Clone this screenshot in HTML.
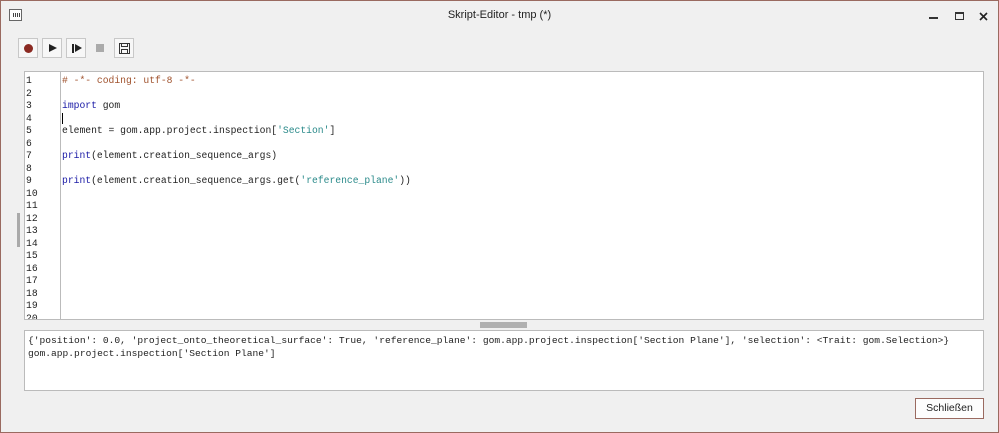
<!DOCTYPE html>
<html><head><meta charset="utf-8"><style>
*{margin:0;padding:0;box-sizing:border-box}
body{width:999px;height:433px;background:#f0f0f0;position:relative;overflow:hidden;font-family:"Liberation Sans",sans-serif}
.frame{position:absolute;left:0;top:0;width:999px;height:433px;border:1px solid #9a6a60}
.title{position:absolute;top:9px;left:0;width:999px;text-align:center;font-size:11px;color:#222}
.appicon{position:absolute;left:9px;top:9px;width:13px;height:12px;border:1px solid #666;background:#fff}
.appicon i{position:absolute;top:3px;width:1px;height:4px;background:#444}
.btn{position:absolute;top:38px;width:20px;height:20px;border:1px solid #c8c8c8;background:#f7f7f7}
.ed{position:absolute;left:24px;top:71px;width:960px;height:249px;background:#fff;border:1px solid #bbb}
.gut{position:absolute;left:0;top:0;width:36px;height:247px;border-right:1px solid #bbb;overflow:hidden}
.mono{font-family:"Liberation Mono",monospace;font-size:9.7px;line-height:12.5px;white-space:pre;color:#222}
.gut .mono{padding-left:1px;padding-top:3px}
.code{position:absolute;left:37px;top:3px}
.out{position:absolute;left:24px;top:330px;width:960px;height:61px;background:#fff;border:1px solid #bbb}
.close{position:absolute;left:915px;top:398px;width:69px;height:21px;border:1px solid #9a6a60;background:#fdfdfd;font-size:10.5px;text-align:center;line-height:19px;color:#222}
</style></head><body>
<div class="frame"></div>
<div class="appicon"><i style="left:3px"></i><i style="left:5px"></i><i style="left:7px"></i><i style="left:9px"></i></div>
<div class="title">Skript-Editor - tmp (*)</div>
<div style="position:absolute;left:929px;top:17px;width:9px;height:2px;background:#333"></div>
<div style="position:absolute;left:955px;top:12px;width:9px;height:8px;border:1px solid #333;border-top-width:2px"></div>
<svg style="position:absolute;left:979px;top:12px" width="9" height="9"><path d="M1 1L8 8M8 1L1 8" stroke="#222" stroke-width="1.6"/></svg>

<div class="btn" style="left:18px"><div style="position:absolute;left:5px;top:5px;width:9px;height:9px;border-radius:50%;background:#8b2a22"></div></div>
<div class="btn" style="left:42px"><div style="position:absolute;left:6px;top:5px;border-left:8px solid #222;border-top:4.5px solid transparent;border-bottom:4.5px solid transparent"></div></div>
<div class="btn" style="left:66px"><div style="position:absolute;left:5px;top:5px;width:2px;height:9px;background:#222"></div><div style="position:absolute;left:8px;top:5px;border-left:7px solid #222;border-top:4.5px solid transparent;border-bottom:4.5px solid transparent"></div></div>
<div class="btn" style="left:90px;border-color:#f0f0f0;background:#f0f0f0"><div style="position:absolute;left:5px;top:5px;width:8px;height:8px;background:#aaa"></div></div>
<div class="btn" style="left:114px"><div style="position:absolute;left:4px;top:4px;width:11px;height:11px;border:1px solid #333"></div><div style="position:absolute;left:6px;top:4px;width:7px;height:4px;border:1px solid #333"></div><div style="position:absolute;left:6px;top:10px;width:7px;height:5px;border:1px solid #333"></div></div>

<div style="position:absolute;left:17px;top:213px;width:3px;height:34px;background:#aaa"></div>

<div class="ed">
<div class="gut"><div class="mono">1
2
3
4
5
6
7
8
9
10
11
12
13
14
15
16
17
18
19
20</div></div>
<div class="code mono"><span style="color:#a0522d"># -*- coding: utf-8 -*-</span>

<span style="color:#1a1aa6">import</span> gom
<span style="border-left:1px solid #000"></span>
element = gom.app.project.inspection[<span style="color:#2a8a8a">'Section'</span>]

<span style="color:#1a1aa6">print</span>(element.creation_sequence_args)

<span style="color:#1a1aa6">print</span>(element.creation_sequence_args.get(<span style="color:#2a8a8a">'reference_plane'</span>))</div>
</div>
<div style="position:absolute;left:480px;top:322px;width:47px;height:6px;background:#b0b0b0"></div>
<div class="out"><div class="mono" style="position:absolute;left:3px;top:4px;font-size:9.6px">{'position': 0.0, 'project_onto_theoretical_surface': True, 'reference_plane': gom.app.project.inspection['Section Plane'], 'selection': &lt;Trait: gom.Selection&gt;}
gom.app.project.inspection['Section Plane']</div></div>
<div class="close">Schließen</div>
</body></html>
